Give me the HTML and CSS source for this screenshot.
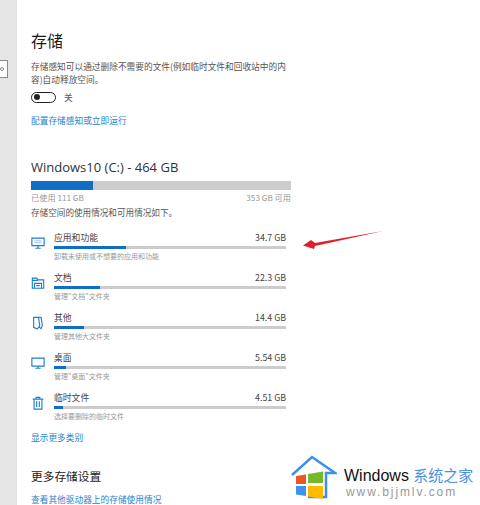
FILE: index.html
```html
<!DOCTYPE html>
<html lang="zh-CN">
<head>
  <meta charset="UTF-8" />
  <title>存储</title>
  <link rel="stylesheet" href="styles.css">
</head>
<body>
  <div class="page">
    <div class="sidebar">
      <div class="search-box"><span class="search-dot"></span></div>
    </div>
    <div class="main">
      <h1>存储</h1>
      <p class="desc">存储感知可以通过删除不需要的文件(例如临时文件和回收站中的内容)自动释放空间。</p>
      <div class="toggle-row">
        <span class="toggle"><span class="knob"></span></span>
        <span class="toggle-label">关</span>
      </div>
      <a class="link config-link">配置存储感知或立即运行</a>

      <h2 class="drive">Windows10 (C:) - 464 GB</h2>
      <div class="drive-bar"><div class="drive-fill"></div></div>
      <div class="drive-info"><span>已使用 111 GB</span><span>353 GB 可用</span></div>
      <p class="usage-note">存储空间的使用情况和可用情况如下。</p>

      <div class="rows">
        <div class="row">
          <svg class="icon" viewBox="0 0 16 14"><path d="M1 1.500h14v8.500H1zM8 10v2.500M5 13h6"/><path class="thin" d="M4 4.500h8M4 6.500h8"/></svg>
          <div class="row-body">
            <div class="row-top"><span>应用和功能</span><span>34.7 GB</span></div>
            <div class="bar"><div class="fill" style="width:31%"></div></div>
            <div class="sub">卸载未使用或不想要的应用和功能</div>
          </div>
        </div>
        <div class="row">
          <svg class="icon" viewBox="0 0 16 14"><path d="M1.500 13V1.500h5l1.500 2h6.500V13zM1.500 4h6.500"/><path d="M4 13V7.500h8V13M6 10h4"/></svg>
          <div class="row-body">
            <div class="row-top"><span>文档</span><span>22.3 GB</span></div>
            <div class="bar"><div class="fill" style="width:20%"></div></div>
            <div class="sub">管理"文档"文件夹</div>
          </div>
        </div>
        <div class="row">
          <svg class="icon" viewBox="0 0 16 16"><path d="M3 1.500h8.500l1.500 9-1.500 4-2.500-2-2 2.500L3 13zM8.500 1.500l1.500 9-1 3"/></svg>
          <div class="row-body">
            <div class="row-top"><span>其他</span><span>14.4 GB</span></div>
            <div class="bar"><div class="fill" style="width:13%"></div></div>
            <div class="sub">管理其他大文件夹</div>
          </div>
        </div>
        <div class="row">
          <svg class="icon" viewBox="0 0 16 14"><path d="M1 1.500h14v9H1zM8 10.500v2.500M5 13h6"/></svg>
          <div class="row-body">
            <div class="row-top"><span>桌面</span><span>5.54 GB</span></div>
            <div class="bar"><div class="fill" style="width:5%"></div></div>
            <div class="sub">管理"桌面"文件夹</div>
          </div>
        </div>
        <div class="row">
          <svg class="icon" viewBox="0 0 16 16"><path d="M3.500 3.500h9V15h-9zM2 3.500h12M6 3.500V1.500h4v2M6.500 6v6.500M9.500 6v6.500"/></svg>
          <div class="row-body">
            <div class="row-top"><span>临时文件</span><span>4.51 GB</span></div>
            <div class="bar"><div class="fill" style="width:4%"></div></div>
            <div class="sub">选择要删除的临时文件</div>
          </div>
        </div>
      </div>

      <a class="link more-link">显示更多类别</a>
      <h2 class="more-title">更多存储设置</h2>
      <a class="link other-link">查看其他驱动器上的存储使用情况</a>
    </div>
  </div>

  <svg class="arrow" viewBox="0 0 82 22"><path d="M81 2 13 14 9 11 1 16.500 12 20 13 17z"/></svg>

  <div class="watermark">
    <svg class="wm-logo" viewBox="0 0 46 46">
      <path class="roof" d="M1 20 21 2 44 18H35V42H17"/>
      <path fill="#ee5522" d="M5 21l10-1.500V29H5z"/>
      <path fill="#77b82a" d="M17 19l15-2.500V28H17z"/>
      <path fill="#3d94ee" d="M5 31h10v10L5 39.500z"/>
      <path fill="#ffb900" d="M17 31h15v13l-15-2.500z"/>
    </svg>
    <div class="wm-text">
      <div class="wm-name">Windows <span>系统之家</span></div>
      <div class="wm-url">www.bjjmlv.com</div>
    </div>
  </div>
</body>
</html>
```

FILE: styles.css
```css
* {
  box-sizing: border-box;
}
html,
body {
  margin: 0;
  height: 505px;
  overflow: hidden;
  background: #fff;
}
body {
  position: relative;
  font-family: "Noto Sans CJK SC", "Liberation Sans", sans-serif;
  color: #222;
}
.page {
  display: flex;
  height: 505px;
}
.sidebar {
  width: 17px;
  flex: none;
  background: #e6e6e6;
  padding-top: 60px;
}
.search-box {
  width: 8px;
  height: 18px;
  background: #fff;
  border: 1px solid #8a8a8a;
  border-left: none;
  display: flex;
  align-items: center;
}
.search-dot {
  width: 4px;
  height: 4px;
  border: 1px solid #888;
  border-radius: 50%;
}
.main {
  flex: 1;
  padding: 27px 0 0 14px;
}
h1 {
  margin: 0;
  font-size: 16px;
  line-height: 26px;
  font-weight: 400;
  color: #1a1a1a;
}
.desc {
  margin: 7px 0 0;
  width: 260px;
  font-size: 8.7px;
  line-height: 13px;
  color: #555;
}
.toggle-row {
  display: flex;
  align-items: center;
  gap: 8px;
  margin-top: 4px;
  height: 14px;
}
.toggle {
  width: 25px;
  height: 11px;
  border: 1.5px solid #222;
  border-radius: 6px;
  display: flex;
  align-items: center;
  padding-left: 2px;
}
.knob {
  width: 6px;
  height: 6px;
  border-radius: 50%;
  background: #222;
}
.toggle-label {
  font-size: 8.7px;
  color: #555;
}
.link {
  display: block;
  font-size: 8.7px;
  line-height: 13px;
  color: #2a82cc;
}
.config-link {
  margin-top: 10px;
}
.drive {
  margin: 31px 0 0;
  font-family: "Open Sans", "Liberation Sans", sans-serif;
  font-size: 13px;
  line-height: 18px;
  font-weight: 400;
  color: #333;
}
.drive-bar {
  width: 260px;
  height: 9px;
  margin-top: 5px;
  background: #cccccc;
}
.drive-fill {
  width: 24%;
  height: 100%;
  background: #0f6fc6;
}
.drive-info {
  display: flex;
  justify-content: space-between;
  width: 260px;
  margin-top: 1px;
  font-size: 8.2px;
  line-height: 12px;
  color: #999;
}
.usage-note {
  margin: 3px 0 0;
  font-size: 8.6px;
  line-height: 13px;
  color: #555;
}
.rows {
  margin-top: 7px;
}
.row {
  display: flex;
  align-items: center;
  gap: 9px;
  height: 40px;
}
.icon {
  width: 14px;
  height: 14px;
  flex: none;
  margin-bottom: 6px;
  fill: none;
  stroke: #1f7fd0;
  stroke-width: 1.3;
}
.icon .thin {
  stroke-width: 0.8;
  stroke: #7ab4e0;
}
.row-body {
  width: 232px;
}
.row-top {
  display: flex;
  justify-content: space-between;
  font-size: 8.8px;
  line-height: 12px;
  color: #444;
}
.bar {
  height: 3px;
  margin-top: 2px;
  background: #cccccc;
}
.fill {
  height: 100%;
  background: #0f6fc6;
}
.sub {
  margin-top: 2px;
  font-size: 7px;
  line-height: 10px;
  color: #999;
}
.more-link {
  margin-top: 5px;
}
.more-title {
  margin: 23px 0 0;
  font-size: 11.7px;
  line-height: 18px;
  font-weight: 400;
  color: #222;
}
.other-link {
  margin-top: 8px;
}
.arrow {
  position: absolute;
  left: 302px;
  top: 229px;
  width: 82px;
  height: 22px;
  fill: #e02027;
}
.watermark {
  position: absolute;
  left: 291px;
  top: 452px;
  width: 189px;
  height: 53px;
  background: #fff;
  display: flex;
  gap: 7px;
  padding-top: 3px;
}
.wm-logo {
  width: 46px;
  height: 46px;
  flex: none;
}
.roof {
  fill: none;
  stroke: #3d8fee;
  stroke-width: 2.5;
}
.wm-text {
  padding-top: 11px;
}
.wm-name {
  font-family: "Liberation Sans", sans-serif;
  font-size: 16px;
  line-height: 17px;
  color: #111;
  white-space: nowrap;
}
.wm-name span {
  font-family: "Noto Sans CJK SC", sans-serif;
  color: #4a90e2;
  font-size: 15px;
}
.wm-url {
  padding-left: 2px;
  font-family: "Liberation Sans", sans-serif;
  font-size: 12px;
  line-height: 16px;
  letter-spacing: 1.9px;
  color: #999;
}
```
